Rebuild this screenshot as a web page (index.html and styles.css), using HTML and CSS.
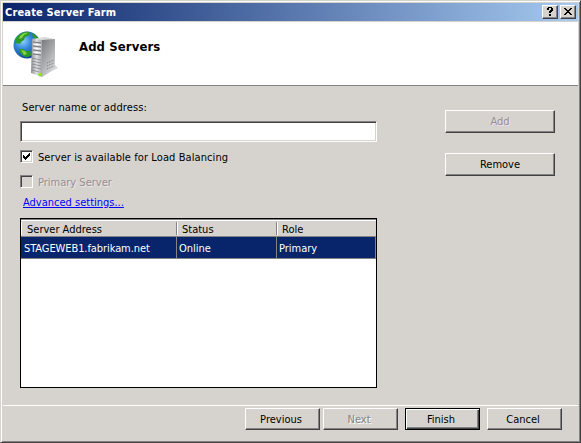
FILE: index.html
```html
<!DOCTYPE html>
<html lang="en">
<head>
<meta charset="utf-8">
<title>Create Server Farm</title>
<link rel="stylesheet" href="styles.css">
</head>
<body>
<div class="window">
  <div class="titlebar">
    <span class="caption">Create Server Farm</span>
    <button class="tool" aria-label="Help"><svg width="8" height="9" viewBox="0 0 8 9" shape-rendering="crispEdges"><path d="M2 0h4v1h1v3H6v1H5v1H3V4h1V3h1V1H3v2H1V1h1zM3 7h2v2H3z"/></svg></button>
    <button class="tool close" aria-label="Close"><svg width="8" height="7" viewBox="0 0 8 7" shape-rendering="crispEdges"><path d="M0 0h2v1h1v1h2V1h1V0h2v1H7v1H6v1H5v1h1v1h1v1h1v1H6V6H5V5H3v1H2v1H0V6h1V5h1V4h1V3H2V2H1V1H0z"/></svg></button>
  </div>
  <header class="banner">
    <svg class="farm" width="46" height="49" viewBox="0 0 46 49">
      <defs>
        <radialGradient id="sea" cx=".35" cy=".35" r=".75"><stop offset="0" stop-color="#8fd2fb"/><stop offset=".4" stop-color="#3687dc"/><stop offset="1" stop-color="#073789"/></radialGradient>
        <linearGradient id="front" x2="1"><stop offset="0" stop-color="#8c8e91"/><stop offset=".5" stop-color="#dddfe1"/><stop offset="1" stop-color="#a3a6aa"/></linearGradient>
        <linearGradient id="side" x2=".6" y2="1"><stop offset="0" stop-color="#77797c"/><stop offset=".45" stop-color="#a0a2a4"/><stop offset="1" stop-color="#d6d7d8"/></linearGradient>
      </defs>
      <path d="M24 47 45 37l-3-3z" fill="#d8d8d8"/>
      <circle cx="14" cy="14" r="13.5" fill="url(#sea)"/>
      <path d="M3 7C6 3 11 0 16 1l1 2-2 2-3 1-1 3-3 2-1 2-3-1-2 2c-1-3 0-5 1-7zM19 2c4 2 7 5 8 8l-4-1-3-3zM6 18l4 0 3 2 4 0 2 4-5 2c-4 0-8-4-8-8z" fill="#2b9b27"/>
      <path d="M7 5c3-3 6-4 8-3l-4 2-2 3-3 1zM8 19l4 1 2 3-3 1z" fill="#8ad245"/>
      <path d="m19 8 13-2 10 2-10 3z" fill="#d8d9da"/>
      <path d="m19 8 10 1v37l-11-4z" fill="url(#front)"/>
      <path d="m29 9 13-1v30L29 46z" fill="url(#side)"/>
      <path d="m20 11 8 1M20 15l8 1M20 19l8 1M20 23l8 1" stroke="#74787c" fill="none"/>
      <path d="m20 13 8 1M20 17l8 1M20 21l8 1" stroke="#fff" fill="none"/>
      <path d="m19 27 9 2M19 30l9 2M19 33l9 2M19 36l9 2M19 39l7 2" stroke="#85888b" stroke-width=".8" fill="none"/>
      <path d="m34 32 7-3M34 35l7-3M34 38l7-3" stroke="#777" stroke-dasharray="1 1" fill="none"/>
      <circle cx="27" cy="43.5" r="1.7" fill="#8fe800"/>
    </svg>
    <h1>Add Servers</h1>
  </header>
  <main class="body">
    <section class="form">
      <label class="name" for="server">Server name or address:</label>
      <input id="server" class="field" type="text">
      <div class="check first"><span class="box"><svg width="7" height="7" viewBox="0 0 7 7" shape-rendering="crispEdges"><path d="M0 2h1v1h1v1h1V3h1V2h1V1h1V0h1v3H6v1H5v1H4v1H3v1H2V6H1V5H0z"/></svg></span><span class="spaced">Server is available for Load Balancing</span></div>
      <div class="check second"><span class="box off"></span><span class="disabled">Primary Server</span></div>
      <a class="link" href="#">Advanced settings...</a>
      <div class="list">
        <div class="row head"><span>Server Address</span><span>Status</span><span>Role</span></div>
        <div class="row selected"><span class="address">STAGEWEB1.fabrikam.net</span><span>Online</span><span>Primary</span></div>
      </div>
    </section>
    <aside class="actions">
      <button class="btn wide disabled">Add</button>
      <button class="btn wide">Remove</button>
    </aside>
  </main>
  <footer class="footer">
    <button class="btn">Previous</button>
    <button class="btn dim">Next</button>
    <button class="btn default">Finish</button>
    <button class="btn">Cancel</button>
  </footer>
</div>
</body>
</html>
```
FILE: styles.css
```css
* { box-sizing: border-box; }
body { margin: 0; }
body, button {
  font-family: "DejaVu Sans Condensed", "DejaVu Sans", sans-serif;
  font-size: 11px;
  color: #000;
}
.window {
  width: 581px;
  height: 443px;
  background: #d6d3ce;
  border: 1px solid;
  border-color: #d6d3ce #424142 #424142 #d6d3ce;
  box-shadow: inset 1px 1px #fff, inset -1px -1px #848284;
  padding: 2px;
  display: flex;
  flex-direction: column;
}
.titlebar {
  height: 18px;
  flex: none;
  display: flex;
  align-items: center;
  padding: 0 2px;
  background: linear-gradient(90deg, #0a246a, #a6caf0);
}
.caption {
  flex: 1;
  color: #fff;
  font-weight: bold;
  line-height: 18px;
  padding-top: 1px;
  letter-spacing: .15px;
}
.tool {
  width: 16px;
  height: 14px;
  padding: 0 1px 1px 0;
  display: flex;
  align-items: center;
  justify-content: center;
  background: #d6d3ce;
  border: 1px solid;
  border-color: #fff #424142 #424142 #fff;
  box-shadow: inset -1px -1px #848284;
}
.close { margin-left: 2px; }
.banner {
  height: 63px;
  margin-top: 1px;
  flex: none;
  display: flex;
  background: #fff;
}
.farm { margin: 9px 0 0 10px; }
h1 {
  margin: 16px 0 0 20px;
  font-size: 13px;
  line-height: 18px;
  letter-spacing: .1px;
}
.body {
  height: 320px;
  flex: none;
  border-top: 1px solid #848284;
  display: flex;
  justify-content: space-between;
  padding: 0 23px 0 17px;
}
.form {
  width: 357px;
  display: flex;
  flex-direction: column;
}
.name { margin: 14px 0 0 2px; line-height: 16px; height: 21px; letter-spacing: .12px; }
.field {
  width: 357px;
  height: 21px;
  padding: 2px;
  border: 1px solid;
  border-color: #848284 #fff #fff #848284;
  box-shadow: inset 1px 1px #424142, inset -1px -1px #d6d3ce;
  outline: none;
  background: #fff;
}
.check { display: flex; align-items: center; gap: 5px; height: 13px; white-space: nowrap; }
.check > span:last-child { padding-top: 2px; }
.spaced { letter-spacing: .09px; }
.first { margin-top: 8px; }
.second { margin-top: 12px; }
.box {
  width: 13px;
  height: 13px;
  display: grid;
  place-items: center;
  background: #fff;
  border: 1px solid;
  border-color: #848284 #fff #fff #848284;
  box-shadow: inset 1px 1px #424142, inset -1px -1px #d6d3ce;
}
.off { background: #d6d3ce; }
.disabled { color: #948f94; text-shadow: 1px 1px #eee4e4; }
.link { color: #00f; margin: 8px 0 0 3px; line-height: 14px; height: 22px; align-self: flex-start; }
.list {
  height: 170px;
  border: 1px solid #000;
  box-shadow: inset 0 1px #848284;
  background: #fff;
  padding-top: 1px;
}
.row { display: grid; grid-template-columns: 156px 100px 99px; white-space: nowrap; }
.head { height: 17px; background: #d6d3ce; border-bottom: 1px solid #848284; border-top: 1px solid #fff; }
.head span { line-height: 15px; padding-left: 5px; margin: 1px 0; height: 13px; border-left: 1px solid #fff; border-right: 1px solid #848284; }
.head span + span { padding-left: 4px; }
.head span:last-child { border-right: 0; }
.selected { height: 22px; background: #08246b; color: #fff; border-bottom: 1px solid #848284; }
.selected span { height: 21px; padding-left: 3px; line-height: 23px; border-right: 1px solid #848284; }
.selected span + span { padding-left: 2px; }
.address { letter-spacing: -.08px; }
.actions { display: flex; flex-direction: column; gap: 20px; padding-top: 24px; }
.btn {
  width: 75px;
  height: 22px;
  padding: 0 0 1px;
  background: #d6d3ce;
  border: 1px solid;
  border-color: #fff #424142 #424142 #fff;
  box-shadow: inset -1px -1px #848284;
}
.wide { width: 110px; height: 23px; }
.btn.disabled { color: #948f94; }
.dim { color: #848284; text-shadow: 1px 1px #fff; }
.footer {
  flex: 1;
  display: flex;
  border-top: 1px solid #fff;
  padding: 2px 0 0 242px;
}
.footer .btn { padding: 0 3px 0 0; }
.dim { margin-left: 3px; }
.default {
  margin: 0 7px;
  border-color: #000;
  box-shadow: inset 1px 1px #fff, inset -1px -1px #424142, inset -2px -2px #848284;
}
```
